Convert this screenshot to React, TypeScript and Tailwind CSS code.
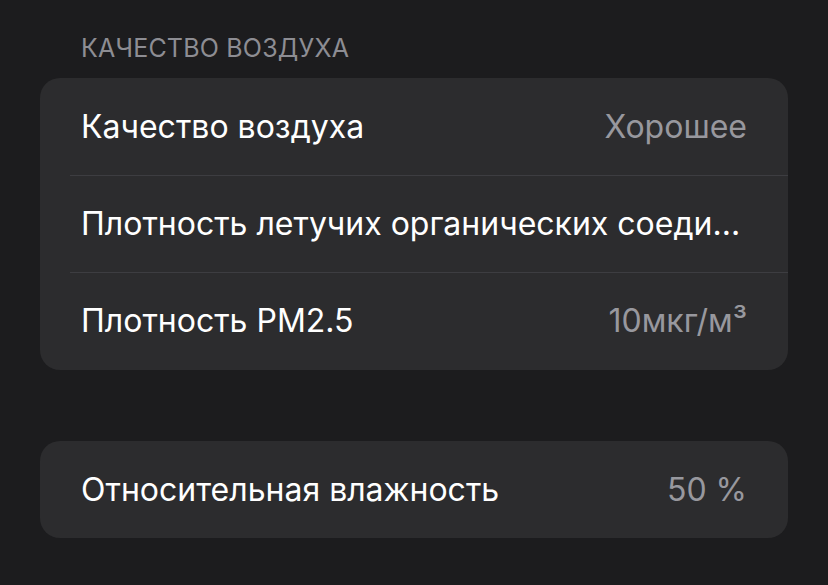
import React from "react";

const Row = ({ label, value, sep, h = "h-[97px]" }: { label: string; value?: string; sep?: boolean; h?: string }) => (
  <div className={`relative flex ${h} items-center pl-[41px] pr-[41px]`}>
    {sep && <div className="absolute left-[30px] right-0 top-0 h-px bg-[#3d3d41]" />}
    <div className="min-w-0 flex-1 whitespace-nowrap text-[32px] text-white">{label}</div>
    {value && <div className="ml-4 shrink-0 text-[32px] text-[#98989e]">{value}</div>}
  </div>
);

export default function App() {
  return (
    <div
      className="h-[585px] w-[828px] overflow-hidden bg-[#1c1c1e] px-[40px] pt-[34px]"
      style={{ fontFamily: "Inter, 'Noto Sans', sans-serif" }}
    >
      <div className="pl-[41px] text-[25px] leading-[28px] tracking-[0.2px] text-[#8d8d93]">КАЧЕСТВО ВОЗДУХА</div>
      <div className="mt-[16px] overflow-hidden rounded-[20px] bg-[#2c2c2e]">
        <Row label="Качество воздуха" value="Хорошее" />
        <Row label="Плотность летучих органических соеди..." sep />
        <Row label="Плотность PM2.5" value="10мкг/м³" sep h="h-[98px]" />
      </div>
      <div className="mt-[71px] overflow-hidden rounded-[20px] bg-[#2c2c2e]">
        <Row label="Относительная влажность" value="50 %" />
      </div>
    </div>
  );
}
